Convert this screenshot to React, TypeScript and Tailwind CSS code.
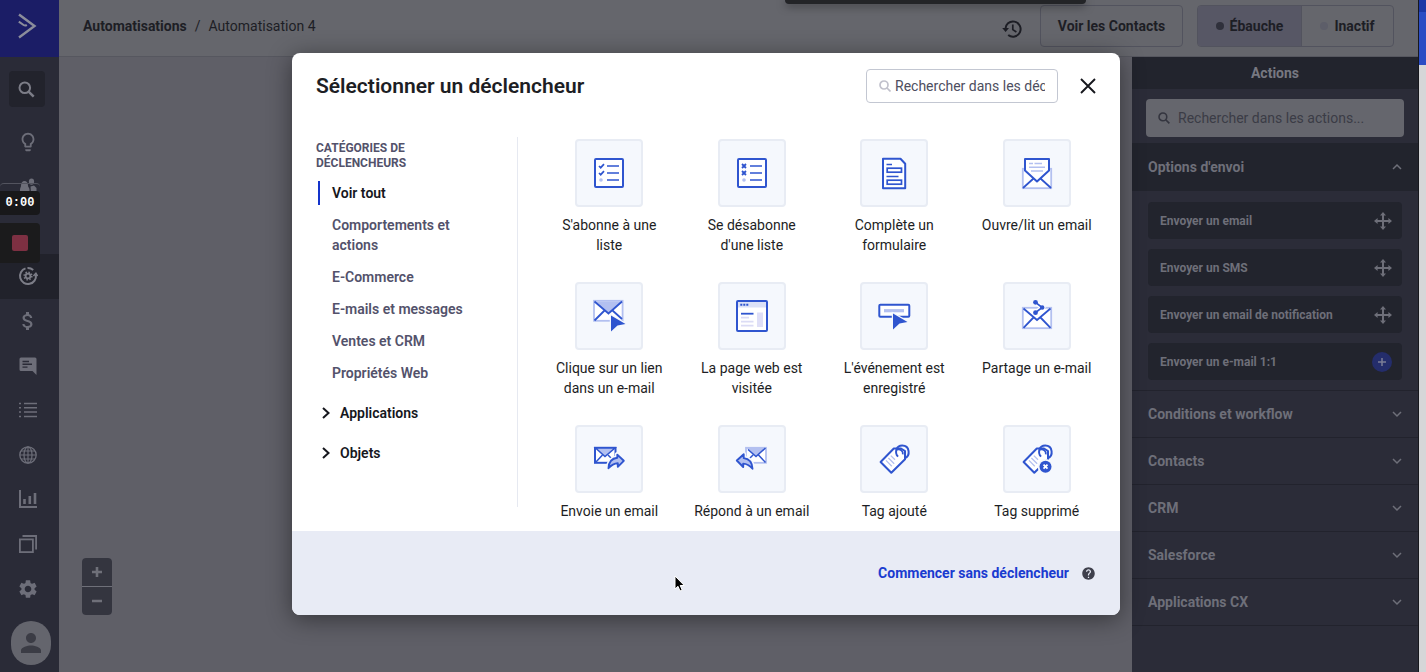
import type { ReactNode } from "react";
import { MdAttachMoney, MdHelp, MdLightbulbOutline, MdPerson, MdSettings } from "react-icons/md";

const BLUE = "#2f55cf";
const LIGHT = "#b3c0f0";

function Svg({ size, box, children, className }: { size: number; box: string; children: ReactNode; className?: string }) {
  return (
    <svg width={size} height={size} viewBox={box} fill="none" className={className} aria-hidden="true">
      {children}
    </svg>
  );
}

/* ---------- sidebar ---------- */

function Logo() {
  return (
    <Svg size={26} box="0 0 26 26">
      <path d="M5 1.5L20.5 13L5 24.5" stroke="#8b8d9b" strokeWidth="2.4" />
      <path d="M4.8 8.6L9.6 12Q11.2 13.1 12.8 11.9" stroke="#8b8d9b" strokeWidth="2" />
    </Svg>
  );
}

function SearchIcon() {
  return (
    <Svg size={17} box="0 0 17 17">
      <circle cx="6.8" cy="6.8" r="5.3" stroke="currentColor" strokeWidth="2" />
      <path d="M10.6 10.6L15.7 15.7" stroke="currentColor" strokeWidth="2.5" />
    </Svg>
  );
}

function PeopleIcon() {
  return (
    <Svg size={18} box="0 0 18 18">
      <path d="M1 11.5C1 9.8 2 9.3 2 7.5C2 4.6 3.5 3 5.5 3S9 4.6 9 7.5C9 9.3 10.5 9.8 10.5 11.5V15H1Z" fill="currentColor" />
      <ellipse cx="12.5" cy="3.6" rx="2.6" ry="3.2" fill="currentColor" />
      <path d="M11.5 8.5L15 7.5L17.5 10V15H12Z" fill="currentColor" />
    </Svg>
  );
}

function AutomationIcon() {
  return (
    <Svg size={20} box="0 0 20 20">
      <path d="M7.5 2.4A8 8 0 1 0 17.9 8.8" stroke="currentColor" strokeWidth="2" />
      <path d="M9.5 2A8 8 0 0 1 15.2 4" stroke="currentColor" strokeWidth="2" />
      <path d="M15.4 10L17.9 7.4L19.6 10" stroke="currentColor" strokeWidth="1.6" />
      <circle cx="10" cy="10" r="2.4" stroke="currentColor" strokeWidth="1.8" />
      <circle cx="10" cy="10" r="3.8" stroke="currentColor" strokeWidth="1.6" strokeDasharray="1.5 1.48" />
    </Svg>
  );
}

function ChatIcon() {
  return (
    <Svg size={18} box="0 0 18 18">
      <path d="M2 0.5H16A1.5 1.5 0 0 1 17.5 2V18L13.5 14H2A1.5 1.5 0 0 1 0.5 12.5V2A1.5 1.5 0 0 1 2 0.5Z" fill="currentColor" />
      <path d="M3.5 4.5H10M3.5 7.3H13M3.5 10.1H8.5" stroke="#2a2b37" strokeWidth="1.4" />
    </Svg>
  );
}

function ListIcon() {
  return (
    <Svg size={18} box="0 0 18 18">
      <path d="M5 2.5H18M5 6.8H18M5 11.1H18M5 15.4H18M0 2.5H2M0 6.8H2M0 11.1H2M0 15.4H2" stroke="currentColor" strokeWidth="1.5" />
    </Svg>
  );
}

function GlobeIcon() {
  return (
    <Svg size={18} box="0 0 18 18">
      <circle cx="9" cy="9" r="8.2" stroke="currentColor" strokeWidth="1.3" />
      <ellipse cx="9" cy="9" rx="4" ry="8.2" stroke="currentColor" strokeWidth="1.2" />
      <path d="M9 1V17M1 9H17M2 5H16M2 13H16" stroke="currentColor" strokeWidth="1.1" />
    </Svg>
  );
}

function ChartIcon() {
  return (
    <Svg size={18} box="0 0 18 18">
      <path d="M1 0V17H18" stroke="currentColor" strokeWidth="2" />
      <path d="M5.5 14V9M10.8 14V6M16 14V3" stroke="currentColor" strokeWidth="2.6" />
    </Svg>
  );
}

function CopyIcon() {
  return (
    <Svg size={18} box="0 0 18 18">
      <rect x="0.9" y="4.4" width="13" height="12.7" stroke="currentColor" strokeWidth="1.8" />
      <path d="M3.5 1H17.1V14.5" stroke="currentColor" strokeWidth="1.8" />
    </Svg>
  );
}

const navItems: { label: string; icon: ReactNode; active?: boolean }[] = [
  { label: "Idées", icon: <MdLightbulbOutline size={22} /> },
  { label: "Contacts", icon: <PeopleIcon /> },
  { label: "Campagnes", icon: null },
  { label: "Automatisations", icon: <AutomationIcon />, active: true },
  { label: "Transactions", icon: <MdAttachMoney size={24} /> },
  { label: "Conversations", icon: <ChatIcon /> },
  { label: "Listes", icon: <ListIcon /> },
  { label: "Site web", icon: <GlobeIcon /> },
  { label: "Rapports", icon: <ChartIcon /> },
  { label: "Applications", icon: <CopyIcon /> },
  { label: "Paramètres", icon: <MdSettings size={22} /> },
];

function Sidebar() {
  return (
    <aside className="flex w-[59px] shrink-0 flex-col bg-[#2a2b37] text-[#6d6e79]">
      <a href="#" aria-label="Accueil" className="flex h-[57px] shrink-0 items-center justify-center bg-[#1b1d66] pr-1.5 pb-1.5">
        <Logo />
      </a>
      <div className="flex h-[63px] shrink-0 justify-center pt-3.5 pr-1.5">
        <button aria-label="Rechercher" className="flex size-9 items-center justify-center rounded bg-[#22232c] text-[#7c7d87]">
          <SearchIcon />
        </button>
      </div>
      <nav className="flex flex-1 flex-col">
        {navItems.map((item) => (
          <a
            key={item.label}
            href="#"
            aria-label={item.label}
            className={`flex flex-1 items-center justify-center pr-1 ${item.active ? "bg-[#21222b] text-[#7c7d87]" : ""}`}
          >
            {item.icon}
          </a>
        ))}
      </nav>
      <div className="flex h-[61px] shrink-0 justify-center pt-2.5 pl-0.5">
        <button aria-label="Profil" className="flex h-11 w-10 items-center justify-center rounded-full bg-[#64656d] text-[#3b3c45]">
          <MdPerson size={30} />
        </button>
      </div>
    </aside>
  );
}

/* ---------- header ---------- */

function HistoryIcon() {
  return (
    <Svg size={20} box="0 0 20 20">
      <path d="M3.4 10.5A7.6 7.6 0 1 1 6.2 16" stroke="currentColor" strokeWidth="2" />
      <path d="M0.2 9H7L3.6 13Z" fill="currentColor" />
      <path d="M10.8 5.4V10.6L14.4 13" stroke="currentColor" strokeWidth="1.7" />
    </Svg>
  );
}

function Header() {
  return (
    <header className="flex h-[57px] items-start justify-between border-b border-[#56575f] bg-[#65666c] pr-6 pl-6 text-[#1d1e25]">
      <nav className="flex h-[52px] items-center gap-2 text-sm">
        <a href="#" className="font-bold">Automatisations</a>
        <span>/</span>
        <span>Automatisation 4</span>
      </nav>
      <div className="flex items-center pt-[5px] text-sm font-bold">
        <button aria-label="Historique" className="mr-[18px] pt-1.5">
          <HistoryIcon />
        </button>
        <button className="mr-3.5 h-[42px] w-[143px] rounded border border-[#52535e]">Voir les Contacts</button>
        <div className="flex h-[42px] overflow-hidden rounded border border-[#52535e]">
          <button className="flex w-[104px] items-center justify-center gap-1.5 border-r border-[#52535e] bg-[#575765]">
            <span className="size-2 rounded-full bg-[#2f303b]" />
            Ébauche
          </button>
          <button className="flex w-[91px] items-center justify-center gap-1.5">
            <span className="size-2 rounded-full bg-[#5d5e69]" />
            Inactif
          </button>
        </div>
      </div>
    </header>
  );
}

/* ---------- actions panel ---------- */

function Chevron({ up }: { up?: boolean }) {
  return (
    <Svg size={10} box="0 0 10 10">
      <path d={up ? "M1 7L5 3L9 7" : "M1 3L5 7L9 3"} stroke="currentColor" strokeWidth="1.5" />
    </Svg>
  );
}

function MoveIcon() {
  return (
    <Svg size={18} box="0 0 18 18">
      <path d="M9 2V16M2 9H16" stroke="currentColor" strokeWidth="2" />
      <path d="M9 0L12 3.6H6ZM9 18L12 14.4H6ZM0 9L3.6 6V12ZM18 9L14.4 6V12Z" fill="currentColor" />
    </Svg>
  );
}

const sendOptions = ["Envoyer un email", "Envoyer un SMS", "Envoyer un email de notification", "Envoyer un e-mail 1:1"];
const sections = ["Conditions et workflow", "Contacts", "CRM", "Salesforce", "Applications CX"];

function ActionsPanel() {
  return (
    <aside className="flex w-[286px] shrink-0 flex-col bg-[#2b2c38] text-sm font-bold text-[#6e6f79]">
      <h2 className="flex h-8 items-center justify-center bg-[#22242d] text-[#777881]">Actions</h2>
      <div className="px-3.5 pt-2.5 pb-1.5">
        <label className="flex h-[38px] items-center gap-2 rounded bg-[#65666d] px-3 text-[#34353f]">
          <Svg size={12} box="0 0 13 13">
            <circle cx="5.3" cy="5.3" r="4.2" stroke="currentColor" strokeWidth="1.7" />
            <path d="M8.4 8.4L12.3 12.3" stroke="currentColor" strokeWidth="1.8" />
          </Svg>
          <input
            aria-label="Rechercher dans les actions"
            placeholder="Rechercher dans les actions..."
            className="min-w-0 flex-1 font-normal outline-none placeholder:text-[#3b3c46]"
          />
        </label>
      </div>
      <button className="flex h-12 items-center justify-between bg-[#22242d] px-4 text-[#6e6f79]">
        Options d'envoi
        <Chevron up />
      </button>
      <ul className="flex flex-col gap-2.5 px-4 pt-[11px] pb-2.5 text-xs">
        {sendOptions.map((option, i) => (
          <li key={option}>
            <button className="flex h-[37px] w-full items-center justify-between rounded bg-[#22242d] pr-2.5 pl-3">
              {option}
              {i < 3 ? (
                <MoveIcon />
              ) : (
                <Svg size={20} box="0 0 20 20">
                  <circle cx="10" cy="10" r="10" fill="#242d6b" />
                  <path d="M10 6V14M6 10H14" stroke="#7b7e96" strokeWidth="1.5" />
                </Svg>
              )}
            </button>
          </li>
        ))}
      </ul>
      <div className="border-t border-[#22232d]">
        {sections.map((section) => (
          <button key={section} className="flex h-[47px] w-full items-center justify-between border-b border-[#22232d] px-4">
            {section}
            <Chevron />
          </button>
        ))}
      </div>
    </aside>
  );
}

/* ---------- trigger icons ---------- */

function Pointer({ x, y }: { x: number; y: number }) {
  return (
    <path
      transform={`translate(${x} ${y})`}
      d="M0 0L14.5 8.5L6.5 10L0 16Z"
      fill={BLUE}
      stroke="#f5f8fd"
      strokeWidth="2.4"
      paintOrder="stroke"
    />
  );
}

function ListOnIcon() {
  return (
    <>
      <rect x="20" y="20" width="28" height="28" rx="1" fill="white" stroke={BLUE} strokeWidth="2" />
      <path d="M32 27H44M32 34H44M32 41H44" stroke={BLUE} strokeWidth="1.6" />
      <path d="M24 27L25.7 28.7L29 25.2M24 34L25.7 35.7L29 32.2" stroke={BLUE} strokeWidth="1.7" />
      <circle cx="26" cy="41" r="1.8" fill={LIGHT} />
    </>
  );
}

function ListOffIcon() {
  return (
    <>
      <rect x="20" y="20" width="28" height="28" rx="1" fill="white" stroke={BLUE} strokeWidth="2" />
      <path d="M32 27H44M32 34H44M32 41H44" stroke={BLUE} strokeWidth="1.6" />
      <path d="M24 25L28 29M28 25L24 29M24 32L28 36M28 32L24 36" stroke={BLUE} strokeWidth="1.8" />
      <circle cx="26" cy="41" r="1.8" fill={LIGHT} />
    </>
  );
}

function FormIcon() {
  return (
    <g stroke={BLUE} strokeWidth="2">
      <path d="M23 19.8H40.5L45.2 24.8V49.2H23Z" fill="white" strokeLinejoin="round" />
      <path d="M26.5 25.5H32M26.5 37.5H38.5" strokeWidth="1.6" />
      <rect x="27.2" y="29.2" width="14.3" height="4" strokeWidth="1.7" />
      <rect x="27.2" y="41.2" width="14.3" height="4" strokeWidth="1.7" />
    </g>
  );
}

function OpenMailIcon() {
  return (
    <>
      <rect x="19.8" y="29.8" width="28.4" height="19.4" fill="white" stroke={LIGHT} strokeWidth="1.8" />
      <path d="M22 20H46V31.5L34 42.5L22 31.5Z" fill="white" stroke={BLUE} strokeWidth="2" strokeLinejoin="round" />
      <path d="M20 49L30.5 39.5M48 49L37.5 39.5" stroke={BLUE} strokeWidth="1.8" />
      <path d="M26 24.5H30M31.5 24.5H39M26 28.2H42M28 32H40" stroke={LIGHT} strokeWidth="1.4" />
    </>
  );
}

function ClickMailIcon() {
  return (
    <>
      <rect x="19" y="18.8" width="28.6" height="20" fill="white" stroke={LIGHT} strokeWidth="1.8" />
      <path d="M19.5 19.5L33.5 31.5L47 19.5Z" fill={LIGHT} />
      <path d="M19.5 19.5L33.5 31.5L47 19.5M19.5 38.5L29.5 28.5M37.5 28.5L47 37" stroke={BLUE} strokeWidth="1.8" />
      <Pointer x={36} y={33.5} />
    </>
  );
}

function WebPageIcon() {
  return (
    <>
      <rect x="19" y="19" width="30" height="30" rx="1" fill="white" stroke={BLUE} strokeWidth="2" />
      <path d="M20 20H48V25.5H20Z" fill="#dbe1f7" />
      <path d="M22.3 22.7H24.3M25.3 22.7H27.3M28.3 22.7H30.3" stroke={BLUE} strokeWidth="2" />
      <path d="M23 31.7H35.5" stroke={BLUE} strokeWidth="1.8" />
      <path d="M23 35.7H31M23 39.7H35.5M23 43.7H35.5" stroke="#dbdcf5" strokeWidth="1.7" />
      <path d="M39 30.5H45V45H39Z" fill="#dfdff7" />
    </>
  );
}

function EventIcon() {
  return (
    <>
      <rect x="19.3" y="22.8" width="30" height="12" rx="1" fill="white" stroke={BLUE} strokeWidth="2" />
      <path d="M24 28.7H44" stroke={LIGHT} strokeWidth="3.2" />
      <Pointer x={33} y={31.5} />
    </>
  );
}

function ShareMailIcon() {
  return (
    <>
      <rect x="19.8" y="25.8" width="28.4" height="20.4" fill="white" stroke={LIGHT} strokeWidth="1.8" />
      <path d="M20.5 26.5L34 38L47.5 26.5M20.5 45.8L30.5 35.5M47.5 45.8L37.5 35.5" stroke={BLUE} strokeWidth="1.8" />
      <path d="M32.5 20.3L39.2 25.5L32.5 30.7" stroke="white" strokeWidth="4.5" />
      <path d="M32.5 20.3L39.2 25.5L32.5 30.7" stroke={BLUE} strokeWidth="1.7" />
      <circle cx="32.5" cy="20.3" r="2.4" fill={BLUE} />
      <circle cx="39.2" cy="25.5" r="2.2" fill={BLUE} />
      <circle cx="32.5" cy="30.7" r="2.4" fill={BLUE} />
    </>
  );
}

function SendMailIcon() {
  return (
    <>
      <rect x="20" y="22.8" width="20.5" height="15" fill="white" stroke={BLUE} strokeWidth="2" />
      <path d="M20.5 23L30 31.5L40 23Z" fill={LIGHT} stroke={BLUE} strokeWidth="1.5" />
      <path d="M20.5 37.5L27.5 30M33 30L37 34" stroke={BLUE} strokeWidth="1.5" />
      <path
        d="M33.5 43.2C33.8 36.8 37.2 33.4 42.3 32.8V29.6L48.8 35.8L42.8 41.8V38.3C39.2 38.4 36.4 39.9 33.5 43.2Z"
        fill="#f5f8fd"
        stroke="#f5f8fd"
        strokeWidth="5"
        strokeLinejoin="round"
      />
      <path
        d="M33.5 43.2C33.8 36.8 37.2 33.4 42.3 32.8V29.6L48.8 35.8L42.8 41.8V38.3C39.2 38.4 36.4 39.9 33.5 43.2Z"
        fill={LIGHT}
        stroke={BLUE}
        strokeWidth="1.9"
        strokeLinejoin="round"
      />
    </>
  );
}

function ReplyMailIcon() {
  return (
    <>
      <rect x="28" y="22.8" width="20" height="15" fill="white" stroke={LIGHT} strokeWidth="1.8" />
      <path d="M28.5 23L38 31.5L47.5 23Z" fill={LIGHT} />
      <path d="M30 24.5L38 31.5L47.5 23M47.5 37.5L40.5 30M35 30L31 34" stroke={BLUE} strokeWidth="1.5" />
      <path
        d="M34.5 43.7C34.2 37.3 30.8 33.7 25.7 33.1V29.2L18.8 35.5L25.2 42V38.6C28.8 38.7 31.6 40.4 34.5 43.7Z"
        fill="#f5f8fd"
        stroke="#f5f8fd"
        strokeWidth="5"
        strokeLinejoin="round"
      />
      <path
        d="M34.5 43.7C34.2 37.3 30.8 33.7 25.7 33.1V29.2L18.8 35.5L25.2 42V38.6C28.8 38.7 31.6 40.4 34.5 43.7Z"
        fill={LIGHT}
        stroke={BLUE}
        strokeWidth="1.9"
        strokeLinejoin="round"
      />
    </>
  );
}

function TagShape() {
  return (
    <>
      <path
        d="M33.8 23.5L20.6 37L31.3 47.8L45 34.2V26L41 23.5Z"
        fill="white"
        stroke={BLUE}
        strokeWidth="2"
        strokeLinejoin="round"
      />
      <path d="M26 35.4L31.8 41.2M28.4 33L34.2 38.8M30.8 30.6L35 34.8" stroke={LIGHT} strokeWidth="1.3" />
      <path d="M38 31.6C34.2 27.5 36.3 20.6 42.2 20.6C49.8 20.6 50.8 31 44.6 33.2" stroke={BLUE} strokeWidth="2" />
      <path d="M36.8 24.6C41 23.8 43.4 26.4 42.8 29.4" stroke={BLUE} strokeWidth="1.8" />
    </>
  );
}

function TagRemovedIcon() {
  return (
    <>
      <TagShape />
      <circle cx="42.5" cy="41.7" r="7.8" fill="#f5f8fd" />
      <circle cx="42.5" cy="41.7" r="6" fill={BLUE} />
      <path d="M40.5 39.7L44.5 43.7M44.5 39.7L40.5 43.7" stroke="white" strokeWidth="1.8" />
    </>
  );
}

const triggers: { label: string; icon: ReactNode }[] = [
  { label: "S'abonne à une liste", icon: <ListOnIcon /> },
  { label: "Se désabonne d'une liste", icon: <ListOffIcon /> },
  { label: "Complète un formulaire", icon: <FormIcon /> },
  { label: "Ouvre/lit un email", icon: <OpenMailIcon /> },
  { label: "Clique sur un lien dans un e-mail", icon: <ClickMailIcon /> },
  { label: "La page web est visitée", icon: <WebPageIcon /> },
  { label: "L'événement est enregistré", icon: <EventIcon /> },
  { label: "Partage un e-mail", icon: <ShareMailIcon /> },
  { label: "Envoie un email", icon: <SendMailIcon /> },
  { label: "Répond à un email", icon: <ReplyMailIcon /> },
  { label: "Tag ajouté", icon: <TagShape /> },
  { label: "Tag supprimé", icon: <TagRemovedIcon /> },
];

/* ---------- modal ---------- */

const categories = ["Voir tout", "Comportements et actions", "E-Commerce", "E-mails et messages", "Ventes et CRM", "Propriétés Web"];

function CategoryNav() {
  return (
    <nav className="mt-1 mb-6 w-[202px] shrink-0 border-r border-[#e6e9f1] pt-1 text-[#53526b]">
      <h3 className="w-32 text-xs leading-[15px] font-bold uppercase">Catégories de déclencheurs</h3>
      <ul className="mt-3 flex flex-col gap-3 pl-0.5 text-sm leading-5 font-semibold">
        {categories.map((category, i) => (
          <li key={category} className="flex">
            <a
              href="#"
              className={`-my-0.5 w-[150px] border-l-2 py-0.5 pl-3 ${i === 0 ? "border-[#1434cb] text-[#16171d]" : "border-transparent"}`}
            >
              {category}
            </a>
          </li>
        ))}
      </ul>
      <div className="mt-5 flex flex-col gap-5 pl-1 text-sm leading-5 font-semibold text-[#16171d]">
        {["Applications", "Objets"].map((group) => (
          <button key={group} className="flex items-center gap-2">
            <Svg size={12} box="0 0 12 12">
              <path d="M3 1L8.5 6L3 11" stroke="currentColor" strokeWidth="2" />
            </Svg>
            {group}
          </button>
        ))}
      </div>
    </nav>
  );
}

function TriggerModal() {
  return (
    <div role="dialog" aria-labelledby="modal-title" className="w-full max-w-[828px] overflow-hidden rounded-lg bg-white text-[#1d1e24] shadow-[0_4px_24px_rgba(0,0,0,0.45)]">
      <div className="flex items-center justify-between pt-4 pr-5 pl-6">
        <h1 id="modal-title" className="text-[21px] leading-7 font-semibold">Sélectionner un déclencheur</h1>
        <div className="flex items-center gap-[18px]">
          <label className="flex h-[34px] w-48 items-center gap-1 rounded border border-[#c3c7d2] px-3">
            <Svg size={12} box="0 0 12 12" className="shrink-0">
              <circle cx="5" cy="5" r="4" stroke="#c1c1cc" strokeWidth="1.7" />
              <path d="M8 8L11.5 11.5" stroke="#c1c1cc" strokeWidth="1.7" />
            </Svg>
            <input
              aria-label="Rechercher dans les déclencheurs"
              placeholder="Rechercher dans les déclencheurs"
              className="min-w-0 flex-1 text-sm outline-none placeholder:text-[#4d4e60]"
            />
          </label>
          <button aria-label="Fermer" className="flex size-6 items-center justify-center">
            <Svg size={16} box="0 0 16 16">
              <path d="M1 1L15 15M15 1L1 15" stroke="#16171d" strokeWidth="1.9" />
            </Svg>
          </button>
        </div>
      </div>
      <div className="mt-[30px] flex pr-3 pl-6">
        <CategoryNav />
        <ul className="ml-5 grid flex-1 grid-cols-4 gap-y-[27px] pt-1.5 pb-2.5">
          {triggers.map((trigger) => (
            <li key={trigger.label}>
              <button className="flex w-full flex-col items-center gap-2 px-2.5 text-sm leading-5">
                <span className="rounded border-2 border-[#e8ecf4] bg-[#f5f8fd]">
                  <svg viewBox="2 2 64 64" fill="none" className="size-16" aria-hidden="true">
                    {trigger.icon}
                  </svg>
                </span>
                {trigger.label}
              </button>
            </li>
          ))}
        </ul>
      </div>
      <div className="flex h-[84px] items-center justify-end gap-3 bg-[#e8ebf5] pr-6">
        <button className="text-sm font-bold text-[#1a3bd0]">Commencer sans déclencheur</button>
        <MdHelp size={15} className="text-[#3f404c]" />
      </div>
    </div>
  );
}

/* ---------- floating pieces ---------- */

function Recorder() {
  return (
    <div className="absolute top-[183px] left-0 flex w-10 flex-col">
      <div className="h-2 rounded-t border-t border-[#53545f]" />
      <div className="flex h-6 items-center justify-center rounded-r bg-[#18181a] font-['Liberation_Mono',monospace] text-xs font-bold text-white">
        0:00
      </div>
      <button aria-label="Arrêter l'enregistrement" className="mt-2 flex h-10 items-center justify-center rounded-r bg-[#1b1b1c]">
        <span className="size-4 rounded-xs bg-[#7d3042]" />
      </button>
    </div>
  );
}

function Zoom() {
  return (
    <div className="flex w-[30px] flex-col gap-px overflow-hidden rounded bg-[#6f7079] text-[#6f7079]">
      <button aria-label="Zoom avant" className="flex h-7 items-center justify-center bg-[#34353f]">
        <Svg size={12} box="0 0 12 12">
          <path d="M6 1V11M1 6H11" stroke="currentColor" strokeWidth="2.6" />
        </Svg>
      </button>
      <button aria-label="Zoom arrière" className="flex h-7 items-center justify-center bg-[#34353f]">
        <Svg size={12} box="0 0 12 12">
          <path d="M1 6H11" stroke="currentColor" strokeWidth="2.6" />
        </Svg>
      </button>
    </div>
  );
}

export default function App() {
  return (
    <div className="relative flex min-h-screen overflow-hidden bg-[#5f5f67] font-[Roboto,'Liberation_Sans',sans-serif]">
      <Sidebar />
      <div className="flex min-w-0 flex-1 flex-col">
        <Header />
        <div className="flex flex-1">
          <main className="flex flex-1 items-end px-[23px] pb-[57px]">
            <Zoom />
          </main>
          <ActionsPanel />
        </div>
      </div>
      <div className="flex w-2 shrink-0 flex-col border-l border-[#17181d] bg-[#d5d6d8]">
        <div className="h-3 bg-[#1b37a6]" />
        <div className="h-[53px] bg-[#2a4cc4]" />
      </div>

      <div className="absolute inset-0 flex items-start justify-center pt-[53px] pr-3.5">
        <TriggerModal />
      </div>
      <div className="absolute top-0 left-[785px] h-1 w-[301px] rounded-b bg-[#232427] shadow-[0_2px_8px_rgba(0,0,0,0.5)]" />
      <Recorder />
      <svg width="12" height="18" viewBox="0 0 12 18" className="absolute top-[575px] left-[674px]" aria-hidden="true">
        <path d="M1 1V14L4 11.3L6 16L8.2 15L6.2 10.5H10.3Z" fill="black" stroke="white" strokeWidth="1" />
      </svg>
    </div>
  );
}
